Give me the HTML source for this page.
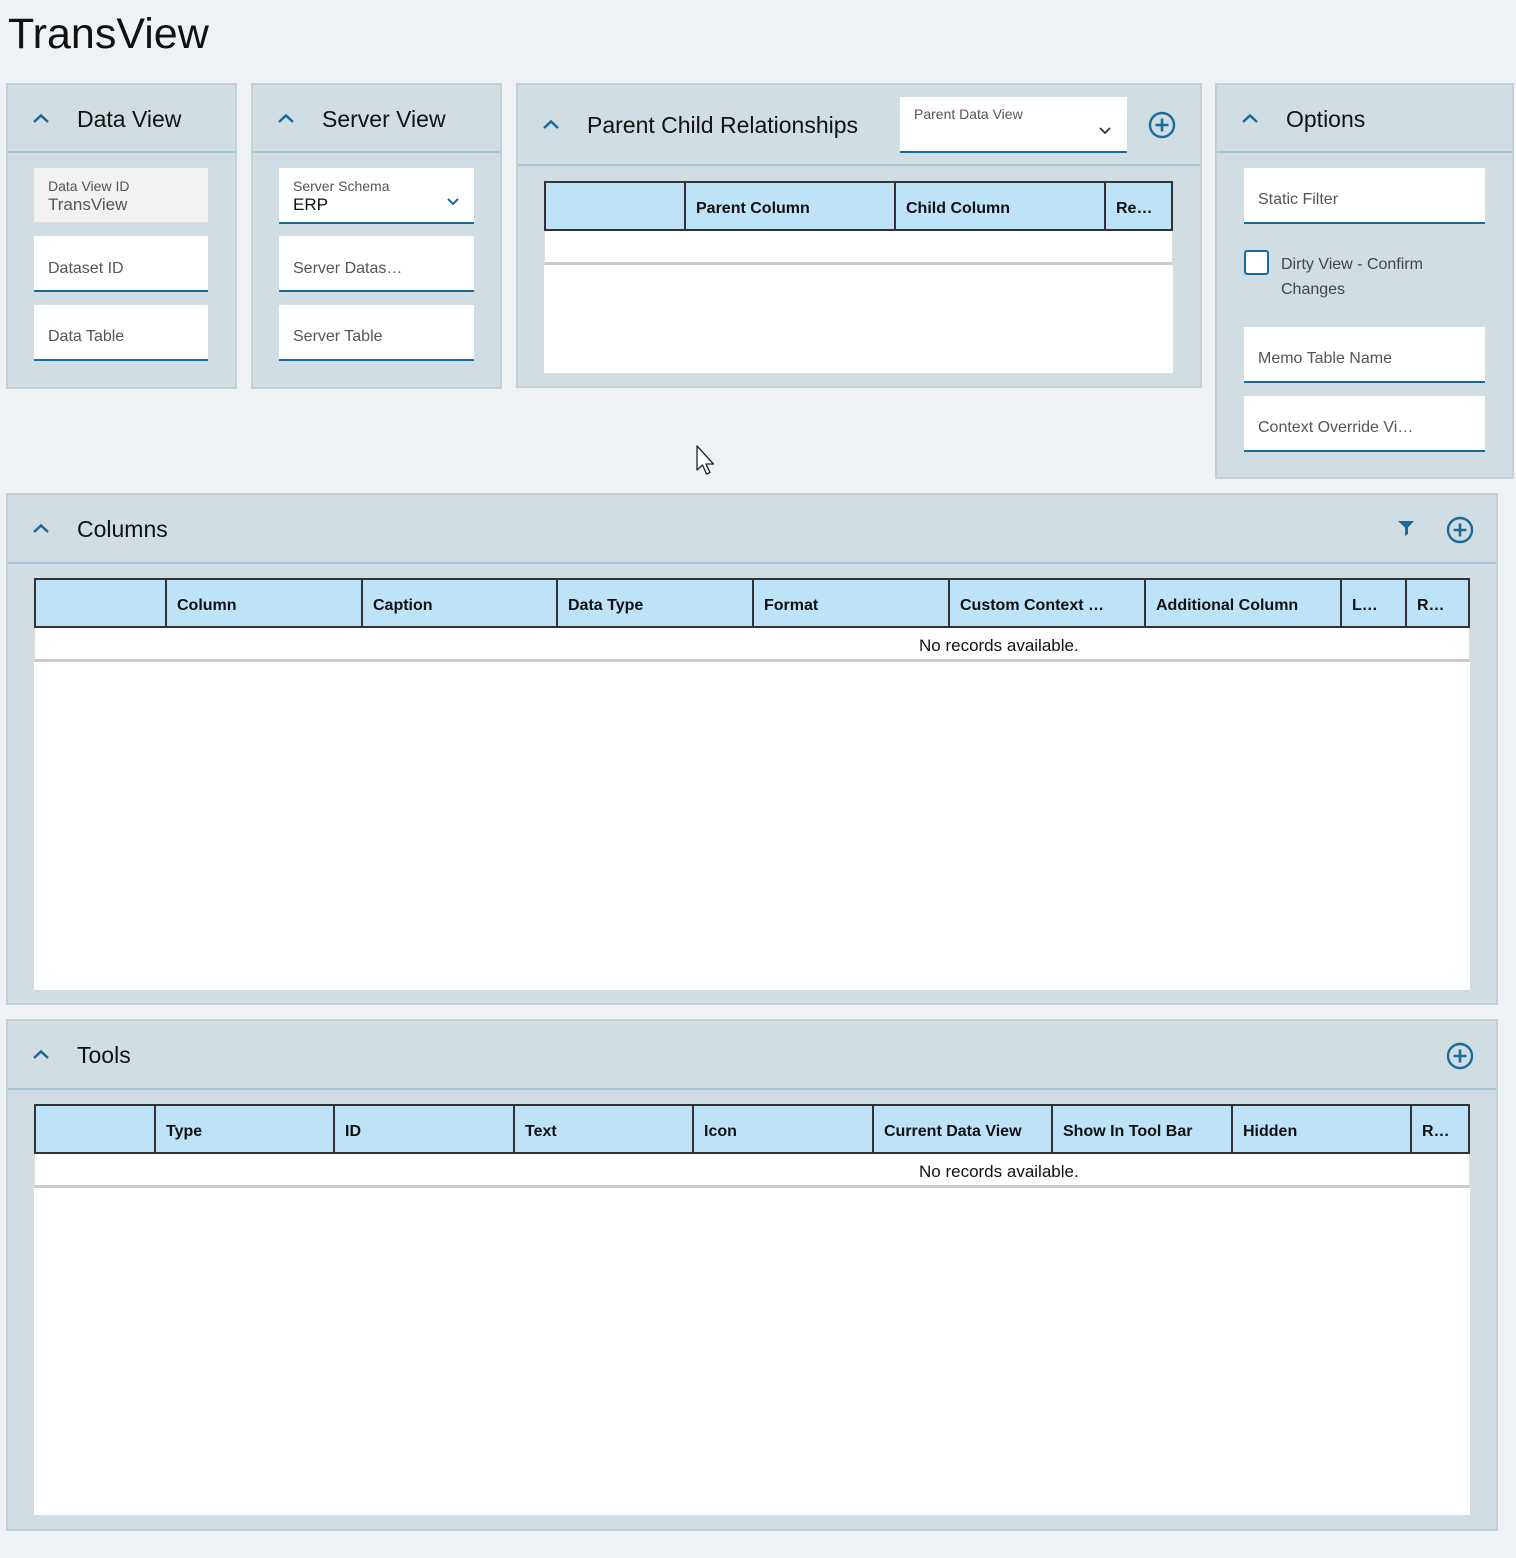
<!DOCTYPE html>
<html><head><meta charset="utf-8">
<style>
*{box-sizing:border-box;margin:0;padding:0}
body{width:1516px;height:1558px;background:#eef2f5;font-family:"Liberation Sans",sans-serif;position:relative;overflow:hidden;color:#111}
.a{position:absolute}
.panel{position:absolute;background:#d0dde2;border:2px solid #c6cfd3}
.hline{position:absolute;left:0;right:0;height:2px;background:#9fc6d4}
.ttl{position:absolute;font-size:23px;color:#111;white-space:nowrap}
.chev{position:absolute;width:18px;height:12px}
.field{position:absolute;background:#fff;border-bottom:2px solid #1b6a9c;font-size:16px;color:#555;padding-left:14px;white-space:nowrap;overflow:hidden}
.tbl{position:absolute}
.th{position:absolute;top:0;height:50px;background:#bee3f8;border:2px solid #333;font-weight:bold;font-size:16px;color:#111;padding:17px 0 0 10px;white-space:nowrap;overflow:hidden}
.row{position:absolute;background:#fff;border-bottom:3px solid #ccc;font-size:16px;text-align:center;color:#111}
.body{position:absolute;background:#fff}
</style></head><body>
<div class="a" style="left:8px;top:10px;font-size:43px;color:#111">TransView</div>

<!-- Data View -->
<div class="panel" style="left:6px;top:83px;width:231px;height:306px">
  <svg class="chev" style="left:24px;top:28px" viewBox="0 0 18 12"><path d="M2 9 L9 2.5 L16 9" fill="none" stroke="#1b6a9c" stroke-width="2.5"/></svg>
  <div class="ttl" style="left:69px;top:21px">Data View</div>
  <div class="hline" style="top:66px"></div>
</div>
<div class="a" style="left:34px;top:168px;width:174px;height:55px;background:#f2f2f2;border-bottom:1px solid #ddd;padding:10px 0 0 14px;color:#555;white-space:nowrap"><div style="font-size:14px">Data View ID</div><div style="font-size:17px;margin-top:1px">TransView</div></div>
<div class="field" style="left:34px;top:236px;width:174px;height:56px;padding-top:24px">Dataset ID</div>
<div class="field" style="left:34px;top:305px;width:174px;height:56px;padding-top:23px">Data Table</div>

<!-- Server View -->
<div class="panel" style="left:251px;top:83px;width:251px;height:306px">
  <svg class="chev" style="left:24px;top:28px" viewBox="0 0 18 12"><path d="M2 9 L9 2.5 L16 9" fill="none" stroke="#1b6a9c" stroke-width="2.5"/></svg>
  <div class="ttl" style="left:69px;top:21px">Server View</div>
  <div class="hline" style="top:66px"></div>
</div>
<div class="field" style="left:279px;top:168px;width:195px;height:56px;padding-top:10px"><div style="font-size:14px">Server Schema</div><div style="font-size:17px;color:#111;margin-top:1px">ERP</div>
<svg class="a" style="left:167px;top:29px" width="14" height="10" viewBox="0 0 14 10"><path d="M2 2 L7 7 L12 2" fill="none" stroke="#1b6a9c" stroke-width="2"/></svg></div>
<div class="field" style="left:279px;top:236px;width:195px;height:56px;padding-top:24px">Server Datas…</div>
<div class="field" style="left:279px;top:305px;width:195px;height:56px;padding-top:23px">Server Table</div>

<!-- Parent Child -->
<div class="panel" style="left:516px;top:83px;width:686px;height:305px">
  <svg class="chev" style="left:24px;top:34px" viewBox="0 0 18 12"><path d="M2 9 L9 2.5 L16 9" fill="none" stroke="#1b6a9c" stroke-width="2.5"/></svg>
  <div class="ttl" style="left:69px;top:27px">Parent Child Relationships</div>
  <div class="hline" style="top:79px"></div>
</div>
<div class="field" style="left:900px;top:97px;width:227px;height:56px;padding-top:9px;font-size:14px">Parent Data View
<svg class="a" style="left:198px;top:29px" width="14" height="10" viewBox="0 0 14 10"><path d="M2 2 L7 7 L12 2" fill="none" stroke="#333" stroke-width="1.8"/></svg></div>
<svg class="a" style="left:1148px;top:111px" width="28" height="28" viewBox="0 0 28 28"><circle cx="14" cy="14" r="12" fill="none" stroke="#1b6a9c" stroke-width="2.4"/><path d="M14 7.5V20.5M7.5 14H20.5" stroke="#1b6a9c" stroke-width="2.6"/></svg>
<div class="tbl" style="left:544px;top:181px;width:629px;height:192px">
  <div class="body" style="left:0;top:0;width:629px;height:192px"></div>
  <div class="th" style="left:0;width:142px"></div>
  <div class="th" style="left:140px;width:212px">Parent Column</div>
  <div class="th" style="left:350px;width:212px">Child Column</div>
  <div class="th" style="left:560px;width:69px">Re…</div>
  <div class="row" style="left:0;top:50px;width:629px;height:34px;border-left:1px solid #ddd;border-right:1px solid #ddd"></div>
</div>

<!-- Options -->
<div class="panel" style="left:1215px;top:83px;width:299px;height:396px">
  <svg class="chev" style="left:24px;top:28px" viewBox="0 0 18 12"><path d="M2 9 L9 2.5 L16 9" fill="none" stroke="#1b6a9c" stroke-width="2.5"/></svg>
  <div class="ttl" style="left:69px;top:21px">Options</div>
  <div class="hline" style="top:66px"></div>
</div>
<div class="field" style="left:1244px;top:168px;width:241px;height:56px;padding-top:23px">Static Filter</div>
<div class="a" style="left:1244px;top:250px;width:25px;height:25px;border:2px solid #1b6a9c;border-radius:3px;background:#fff"></div>
<div class="a" style="left:1281px;top:252px;font-size:16px;color:#444;line-height:25px">Dirty View - Confirm<br>Changes</div>
<div class="field" style="left:1244px;top:327px;width:241px;height:56px;padding-top:23px">Memo Table Name</div>
<div class="field" style="left:1244px;top:396px;width:241px;height:56px;padding-top:23px">Context Override Vi…</div>

<!-- cursor -->
<svg class="a" style="left:695px;top:445px" width="22" height="34" viewBox="0 0 22 34"><path d="M2 1 L2 25 L7.5 20 L11.5 29 L15 27.5 L11 19 L18.5 19 Z" fill="#fff" stroke="#222" stroke-width="1.3" stroke-linejoin="round"/></svg>

<!-- Columns -->
<div class="panel" style="left:6px;top:493px;width:1492px;height:512px">
  <svg class="chev" style="left:24px;top:28px" viewBox="0 0 18 12"><path d="M2 9 L9 2.5 L16 9" fill="none" stroke="#1b6a9c" stroke-width="2.5"/></svg>
  <div class="ttl" style="left:69px;top:21px">Columns</div>
  <div class="hline" style="top:67px"></div>
  <svg class="a" style="left:1389px;top:24px" width="18" height="18" viewBox="0 0 18 18"><path d="M1 2 H17 L11 8.5 V15 L8 17 V8.5 Z" fill="#1b6a9c"/></svg>
  <svg class="a" style="left:1438px;top:21px" width="28" height="28" viewBox="0 0 28 28"><circle cx="14" cy="14" r="12" fill="none" stroke="#1b6a9c" stroke-width="2.4"/><path d="M14 7.5V20.5M7.5 14H20.5" stroke="#1b6a9c" stroke-width="2.6"/></svg>
</div>
<div class="tbl" style="left:34px;top:578px;width:1436px;height:412px">
  <div class="body" style="left:0;top:0;width:1436px;height:412px"></div>
  <div class="th" style="left:0;width:133px"></div>
  <div class="th" style="left:131px;width:198px">Column</div>
  <div class="th" style="left:327px;width:197px">Caption</div>
  <div class="th" style="left:522px;width:198px">Data Type</div>
  <div class="th" style="left:718px;width:198px">Format</div>
  <div class="th" style="left:914px;width:198px">Custom Context …</div>
  <div class="th" style="left:1110px;width:198px">Additional Column</div>
  <div class="th" style="left:1306px;width:67px">L…</div>
  <div class="th" style="left:1371px;width:65px">R…</div>
  <div class="row" style="left:0;top:50px;width:1436px;height:34px;padding:8px 0 0 884px;text-align:left;border-left:1px solid #ddd;border-right:1px solid #ddd;font-size:17px">No records available.</div>
</div>

<!-- Tools -->
<div class="panel" style="left:6px;top:1019px;width:1492px;height:512px">
  <svg class="chev" style="left:24px;top:28px" viewBox="0 0 18 12"><path d="M2 9 L9 2.5 L16 9" fill="none" stroke="#1b6a9c" stroke-width="2.5"/></svg>
  <div class="ttl" style="left:69px;top:21px">Tools</div>
  <div class="hline" style="top:67px"></div>
  <svg class="a" style="left:1438px;top:21px" width="28" height="28" viewBox="0 0 28 28"><circle cx="14" cy="14" r="12" fill="none" stroke="#1b6a9c" stroke-width="2.4"/><path d="M14 7.5V20.5M7.5 14H20.5" stroke="#1b6a9c" stroke-width="2.6"/></svg>
</div>
<div class="tbl" style="left:34px;top:1104px;width:1436px;height:411px">
  <div class="body" style="left:0;top:0;width:1436px;height:411px"></div>
  <div class="th" style="left:0;width:122px"></div>
  <div class="th" style="left:120px;width:181px">Type</div>
  <div class="th" style="left:299px;width:182px">ID</div>
  <div class="th" style="left:479px;width:181px">Text</div>
  <div class="th" style="left:658px;width:182px">Icon</div>
  <div class="th" style="left:838px;width:181px">Current Data View</div>
  <div class="th" style="left:1017px;width:182px">Show In Tool Bar</div>
  <div class="th" style="left:1197px;width:181px">Hidden</div>
  <div class="th" style="left:1376px;width:60px">R…</div>
  <div class="row" style="left:0;top:50px;width:1436px;height:34px;padding:8px 0 0 884px;text-align:left;border-left:1px solid #ddd;border-right:1px solid #ddd;font-size:17px">No records available.</div>
</div>
</body></html>
